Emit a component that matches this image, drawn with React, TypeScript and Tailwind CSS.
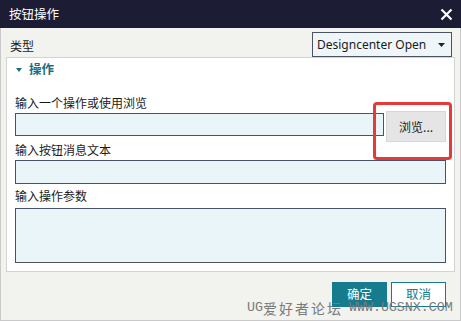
import React from "react"

const cjk = '"Noto Sans CJK SC", "Noto Sans", sans-serif'

export default function App() {
  return (
    <div
      className="relative flex h-[321px] w-[461px] flex-col bg-[#f2f2ee] text-[12px] text-[#1b1b1b]"
      style={{ fontFamily: cjk }}
    >
      {/* title bar */}
      <div className="flex h-[28px] shrink-0 items-center justify-between bg-[#1d1c35] pl-[9px] pr-[8px]">
        <span className="text-[12.5px] leading-none text-white">按钮操作</span>
        <svg width="13" height="13" viewBox="0 0 13 13">
          <path d="M1.5 1.5 L11.5 11.5 M11.5 1.5 L1.5 11.5" stroke="#fff" strokeWidth="2.2" />
        </svg>
      </div>

      <div className="flex flex-1 flex-col border-x border-b border-[#c9c9c9] px-[5px]">
        {/* type row */}
        <div className="flex h-[29px] shrink-0 items-end justify-between pr-[3px]">
          <span className="mb-[5px] ml-[4px] text-[12px] leading-none">类型</span>
          <div className="flex h-[25px] w-[140px] items-center justify-between border border-[#4b5363] bg-[#eef6fa] pl-[4px] pr-[6px]">
            <span className="text-[12px] leading-none" style={{ fontFamily: '"Noto Sans", sans-serif' }}>
              Designcenter Open
            </span>
            <svg width="7" height="4" viewBox="0 0 7 4">
              <path d="M0 0 H7 L3.5 4 Z" fill="#222" />
            </svg>
          </div>
        </div>

        {/* section panel */}
        <div className="flex h-[215px] shrink-0 flex-col border border-[#d3d3d3] bg-white px-[8px]">
          <div className="flex h-[22px] items-center gap-[7px] pl-[1px] pt-[1px]">
            <svg width="6" height="4" viewBox="0 0 6 4">
              <path d="M0 0 H6 L3 4 Z" fill="#1a6e80" />
            </svg>
            <span className="text-[12.5px] font-bold leading-none text-[#1a6e80]">操作</span>
          </div>

          <div className="mt-[13px] text-[12px] leading-[20px]">输入一个操作或使用浏览</div>
          <div className="mt-[-2px] flex items-start gap-[2px]">
            <div className="mt-[2px] h-[23px] w-[370px] border border-[#4b5363] bg-[#eaf5f9]" />
            <button className="flex h-[31px] w-[60px] items-center justify-center border border-[#d6d6d6] bg-[#e5e5e5] text-[12px]">
              浏览...
            </button>
          </div>

          <div className="mt-[-1px] text-[12px] leading-[18px]">输入按钮消息文本</div>
          <div className="mt-[1px] h-[24px] border border-[#4b5363] bg-[#eaf5f9]" />
          <div className="mt-[3px] text-[12px] leading-[18px]">输入操作参数</div>
          <div className="mt-[3px] h-[55px] border border-[#4b5363] bg-[#eaf5f9]" />
        </div>

        {/* footer buttons */}
        <div className="mt-[10px] flex justify-end gap-[4px] pr-[9px]">
          <button className="h-[25px] w-[55px] bg-[#167b8d] text-[12.5px] text-white">确定</button>
          <button className="h-[25px] w-[55px] border border-[#167b8d] bg-white text-[12.5px] text-[#167b8d]">取消</button>
        </div>
      </div>

      {/* red highlight */}
      <div className="absolute left-[373px] top-[102px] h-[58px] w-[79px] rounded-[4px] border-[3px] border-[#e63a3a]" />

      {/* watermark */}
      <div
        className="absolute left-[247px] top-[301px] flex items-center text-[#7a7a7a]"
        style={{ fontFamily: '"Liberation Mono", "Noto Sans CJK SC", monospace' }}
      >
        <span className="text-[13.3px] leading-none">UG</span>
        <span className="text-[14px] leading-none tracking-[2px]" style={{ fontFamily: cjk }}>爱好者论坛</span>
        <span className="ml-[6px] text-[13.3px] leading-none">WWW.UGSNX.COM</span>
      </div>
    </div>
  )
}
